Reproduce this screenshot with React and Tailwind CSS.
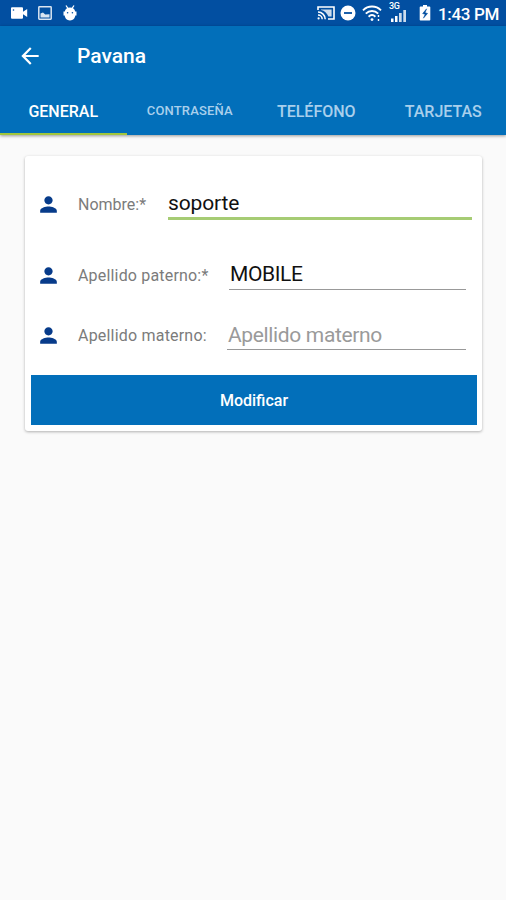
function PersonIcon() {
  return (
    <svg viewBox="0 0 24 24" className="-ml-px h-[25px] w-[25px] shrink-0 fill-[#073b8a]">
      <path d="M12 12c2.21 0 4-1.79 4-4s-1.79-4-4-4-4 1.79-4 4 1.79 4 4 4zm0 2c-2.67 0-8 1.34-8 4v2h16v-2c0-2.66-5.33-4-8-4z" />
    </svg>
  );
}

function StatusBar() {
  return (
    <div className="flex h-[26px] shrink-0 items-center bg-[#024fa1] text-white">
      <svg viewBox="0 0 18 14" className="ml-[10px] h-[14px] w-[18px] fill-white">
        <path d="M2 1.200h10a1 1 0 0 1 1 1v3.500l4.200-2.800v8.200L13 8.300v3.500a1 1 0 0 1-1 1H2a1 1 0 0 1-1-1V2.200a1 1 0 0 1 1-1z" />
        <circle cx="3.500" cy="4" r="0.800" fill="#024fa1" />
      </svg>
      <svg viewBox="0 0 14 14" className="ml-[10px] h-[14px] w-[14px] opacity-85">
        <rect x="0.8" y="0.8" width="12.400" height="12.400" rx="0.6" fill="none" stroke="white" strokeWidth="1.500" />
        <path d="M2.500 11.500V7.600L5 6.400l2.200 2.200 4.300-.4v3.300z" fill="white" />
      </svg>
      <svg viewBox="0 0 16 18" className="ml-[10px] h-[18px] w-[16px]">
        <path d="M4 1.500l2 3M12 1.500l-2 3" stroke="white" strokeWidth="1.300" />
        <path d="M1.500 7.500h1.300C3.300 4.800 5.200 3.400 8 3.400s4.700 1.400 5.200 4.100h1.300v4h-1.200c-.3 2.600-2 4.900-5.300 4.900s-5-2.300-5.300-4.900H1.500z" fill="white" />
        <circle cx="5.600" cy="8.800" r="0.800" fill="#024fa1" />
        <circle cx="10.400" cy="8.800" r="0.800" fill="#024fa1" />
      </svg>

      <svg viewBox="0 0 18 14" className="ml-[239px] h-[14px] w-[18px]" fill="none" stroke="white">
        <path d="M1 4V1h16v12h-6" strokeWidth="1.600" />
        <path d="M4 3.400h10.600v7.200h-3.200C10 7 7.500 4.600 4 4z" fill="white" stroke="none" opacity=".8" />
        <path d="M1 6a7.200 7.200 0 0 1 7.200 7.200M1 9a4.200 4.200 0 0 1 4.200 4.200" strokeWidth="1.500" />
        <circle cx="1.600" cy="12.400" r="1.100" fill="white" stroke="none" />
      </svg>
      <svg viewBox="0 0 16 16" className="ml-[5px] h-[16px] w-[16px]">
        <circle cx="8" cy="8" r="7.500" fill="white" />
        <path d="M4 8h8" stroke="#024fa1" strokeWidth="1.800" />
      </svg>
      <svg viewBox="0 0 20 18" className="ml-[6px] h-[18px] w-[20px]" fill="none" stroke="white" strokeWidth="1.900">
        <path d="M1 6.300c5-5 13-5 18 0M3.800 9.600c3.600-3.500 8.800-3.500 12.400 0M6.600 12.700c2-1.900 4.800-1.900 6.800 0" />
        <circle cx="10" cy="15.600" r="1.400" fill="white" stroke="none" />
        <path d="M16.500 11v2M16.500 15v2" strokeWidth="1.400" />
      </svg>
      <div className="ml-[7px] flex h-[22px] w-[18px] flex-col">
        <span className="h-[7px] text-[9px] leading-[9px] font-medium tracking-[-0.3px]">3G</span>
        <svg viewBox="0 0 17 13" className="ml-[1px] h-[13px] w-[17px] fill-white">
          <path d="M1 9.500h2.500V13H1zM5 7h2.500v6H5z" />
          <path d="M9 4h2.700v9H9zM13.300 1H16v12h-2.700z" opacity=".8" />
        </svg>
      </div>
      <svg viewBox="0 0 12 16" className="ml-[12px] h-[16px] w-[12px]">
        <path d="M4 0h4v1.500h2.500a.8.800 0 0 1 .8.800v12.400a.8.800 0 0 1-.8.800h-9a.8.800 0 0 1-.8-.8V2.300a.8.800 0 0 1 .8-.8H4z" fill="white" />
        <path d="M7.600 3.800L3.600 8.600l2.500.6-1.700 4 4.200-4.800-2.500-.6z" fill="#024fa1" stroke="#024fa1" strokeWidth="0.500" />
      </svg>
      <span className="ml-[7px] pt-px text-[17px] leading-[20px] font-medium tracking-[-0.35px] whitespace-nowrap">1:43 PM</span>
    </div>
  );
}

function Field({ label, value, placeholder, rowClass, labelClass, inputClass, textClass }) {
  return (
    <div className={`flex items-center pl-[12px] ${rowClass}`}>
      <PersonIcon />
      <span className={`ml-[17px] shrink-0 text-[16px] leading-[20px] whitespace-nowrap text-[#7b7b7b] ${labelClass}`}>{label}</span>
      <div className={`h-full shrink-0 ${inputClass}`}>
        <span className={`block text-[21px] leading-[28px] whitespace-nowrap ${textClass}`}>{value || placeholder}</span>
      </div>
    </div>
  );
}

export default function App() {
  return (
    <div className="flex h-[900px] w-[506px] flex-col overflow-hidden bg-[#fafafa] font-['Roboto',sans-serif]">
      <StatusBar />
      <header className="h-[109px] shrink-0 bg-[#026fba] shadow-[0_1px_3px_rgba(0,0,0,0.4)]">
        <div className="flex h-[60px] items-center text-white">
          <svg viewBox="0 0 24 24" className="mb-px ml-[17px] h-[26px] w-[26px] fill-white">
            <path d="M20 11H7.830l5.590-5.590L12 4l-8 8 8 8 1.410-1.410L7.830 13H20v-2z" />
          </svg>
          <h1 className="ml-[34px] text-[21px] leading-[28px] font-medium">Pavana</h1>
        </div>
        <nav className="grid h-[49px] grid-cols-4 text-center font-medium whitespace-nowrap text-[#a9cfec]">
          <div className="border-b-2 border-[#a2c63c] pt-[15px] text-[16px] leading-[22px] text-white">GENERAL</div>
          <div className="pt-[14px] text-[13px] leading-[22px] tracking-[0.15px]">CONTRASEÑA</div>
          <div className="pt-[15px] text-[16px] leading-[22px]">TELÉFONO</div>
          <div className="pt-[15px] pl-px text-[16px] leading-[22px]">TARJETAS</div>
        </nav>
      </header>
      <main className="mt-[21px] ml-[25px] flex h-[275px] w-[457px] flex-col rounded-[3px] bg-white shadow-[0_1px_3px_rgba(0,0,0,0.3)]">
        <Field label="Nombre:*" value="soporte" rowClass="mt-[33px] h-[31px]" labelClass="w-[90px]" inputClass="w-[304px] border-b-[3px] border-[#a6cc74]" textClass="tracking-[-0.15px] text-[#111111]" />
        <Field label="Apellido paterno:*" value="MOBILE" rowClass="mt-[40px] h-[30px]" labelClass="w-[151px] pt-[2px] tracking-[0.18px]" inputClass="w-[237px] border-b border-[#999999]" textClass="pl-px tracking-[-0.4px] text-[#111111]" />
        <Field label="Apellido materno:" placeholder="Apellido materno" rowClass="mt-[30px] h-[30px]" labelClass="w-[149px] pt-[2px] tracking-[0.2px]" inputClass="w-[239px] border-b border-[#999999]" textClass="pl-px pt-px tracking-[-0.35px] text-[#9a9a9a]" />
        <button className="mt-[25px] ml-[6px] h-[50px] w-[446px] bg-[#026fba] pt-[2px] text-[16px] font-medium text-white">Modificar</button>
      </main>
    </div>
  );
}
